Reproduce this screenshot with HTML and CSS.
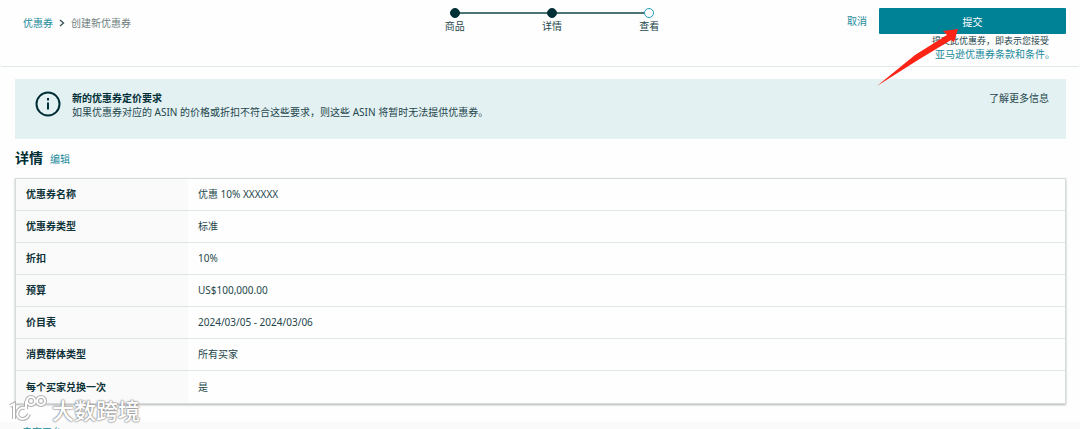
FILE: index.html
```html
<!DOCTYPE html>
<html lang="zh-CN">
<head>
    <meta charset="UTF-8">
    <meta name="viewport" content="width=device-width, initial-scale=1.0">
    <title>创建新优惠券</title>
    <link rel="stylesheet" href="styles.css">
</head>
<body>
    <header class="topbar">
        <nav class="breadcrumb">
            <a href="#">优惠券</a>
            <svg class="chevron" viewBox="0 0 6 8"><path d="M1 1l3.5 3L1 7"/></svg>
            <span>创建新优惠券</span>
        </nav>

        <ol class="steps">
            <li class="step done"><span class="dot"></span>商品</li>
            <li class="step done"><span class="dot"></span>详情</li>
            <li class="step current"><span class="dot"></span>查看</li>
        </ol>

        <div class="actions">
            <a class="cancel" href="#">取消</a>
            <div class="submit-box">
                <button class="submit" type="button">提交</button>
                <p class="terms">提交此优惠券，即表示您接受</p>
                <p class="terms-link"><a href="#">亚马逊优惠券条款和条件。</a></p>
                <svg class="arrow" viewBox="0 0 84 60"><path d="M2 58L40 27L72 7L68 3L83 1L79 14L76 12L43 32Z"/></svg>
            </div>
        </div>
    </header>

    <main>
        <section class="notice">
            <svg class="info" viewBox="0 0 26 26">
                <circle cx="13" cy="13" r="11.5"/>
                <path d="M13 11.5v7M13 7v2.4"/>
            </svg>
            <div class="notice-text">
                <h2>新的优惠券定价要求</h2>
                <p>如果优惠券对应的 ASIN 的价格或折扣不符合这些要求，则这些 ASIN 将暂时无法提供优惠券。</p>
            </div>
            <a class="more" href="#">了解更多信息</a>
        </section>

        <div class="heading">
            <h1>详情</h1>
            <a href="#">编辑</a>
        </div>

        <table class="details">
            <tr><th scope="row">优惠券名称</th><td>优惠 10% XXXXXX</td></tr>
            <tr><th scope="row">优惠券类型</th><td>标准</td></tr>
            <tr><th scope="row">折扣</th><td>10%</td></tr>
            <tr><th scope="row">预算</th><td>US$100,000.00</td></tr>
            <tr><th scope="row">价目表</th><td>2024/03/05 - 2024/03/06</td></tr>
            <tr><th scope="row">消费群体类型</th><td>所有买家</td></tr>
            <tr><th scope="row">每个买家兑换一次</th><td>是</td></tr>
        </table>
    </main>

    <footer class="footer">
        <a href="#">卖家平台</a>
    </footer>

    <div class="watermark">
        <svg viewBox="0 0 40 28">
            <g class="edge">
                <path d="M2 10l4-2v15M17 12c-8-2-11 10-3 11c4 0 6-2 7-5M18 13V5"/>
                <circle cx="23" cy="5" r="4"/><circle cx="33" cy="5" r="4"/>
            </g>
            <g class="fill">
                <path d="M2 10l4-2v15M17 12c-8-2-11 10-3 11c4 0 6-2 7-5M18 13V5"/>
                <circle cx="23" cy="5" r="4"/><circle cx="33" cy="5" r="4"/>
            </g>
        </svg>
        <span>大数跨境</span>
    </div>
</body>
</html>
```
FILE: styles.css
```css
* {
    margin: 0;
    padding: 0;
    box-sizing: border-box;
}

body {
    position: relative;
    height: 100vh;
    overflow: hidden;
    font-family: "Noto Sans", "Noto Sans CJK SC", sans-serif;
    font-size: 10px;
    line-height: 14px;
    color: #25474c;
    background-color: #fefefe;
}

a {
    color: #1b8a9b;
    text-decoration: none;
}

/* Header */
.topbar {
    display: grid;
    grid-template-columns: 51fr 292px 49fr;
    height: 67px;
    padding: 8px 14px 0 23px;
    border-bottom: 1px solid #e0e9ea;
    border-radius: 0 0 3px 3px;
}

.breadcrumb {
    display: flex;
    align-items: center;
    gap: 6px;
    height: 30px;
    color: #6f7f80;
}

.chevron {
    width: 6px;
    height: 8px;
    fill: none;
    stroke: #3c5558;
    stroke-width: 1.4;
}

/* Steps */
.steps {
    display: flex;
    list-style: none;
}

.step {
    position: relative;
    flex: 1;
    text-align: center;
}

.step + .step::before {
    content: "";
    position: absolute;
    top: 4px;
    right: 50%;
    width: 100%;
    height: 2px;
    background-color: #4d7377;
}

.dot {
    position: relative;
    z-index: 1;
    display: block;
    width: 10px;
    height: 10px;
    margin: 0 auto 1px;
    border: 1px solid #002f36;
    border-radius: 50%;
    background-color: #002f36;
}

.current .dot {
    border: 1px solid #1f9fb5;
    background-color: #fff;
}

/* Buttons */
.actions {
    display: flex;
    justify-content: flex-end;
    gap: 12px;
}

.cancel {
    padding-top: 6px;
}

.submit-box {
    position: relative;
    width: 187px;
}

.submit {
    display: block;
    width: 100%;
    height: 26px;
    padding-top: 2px;
    border: none;
    border-radius: 1px;
    background-color: #008296;
    color: #fff;
    font: inherit;
    cursor: pointer;
}

.terms {
    padding-right: 17px;
    font-size: 9px;
    text-align: right;
}

.terms-link {
    padding-right: 11px;
    line-height: 13px;
    text-align: right;
}

.arrow {
    position: absolute;
    top: 20px;
    left: -4px;
    width: 84px;
    height: 60px;
    fill: #fb2416;
}

/* Notice */
main {
    padding: 12px 14px 0 15px;
}

.notice {
    display: flex;
    height: 60px;
    padding: 12px 17px 0 20px;
    background-color: #e3f1f3;
}

.info {
    width: 26px;
    height: 26px;
    margin-right: 11px;
    fill: none;
    stroke: #002f36;
    stroke-width: 2;
}

.notice-text {
    flex: 1;
}

.notice h2 {
    font-size: 10px;
    line-height: 14px;
    color: #002f36;
}

.more {
    color: #25474c;
}

/* Details */
.heading {
    display: flex;
    align-items: baseline;
    gap: 7px;
    padding: 8px 0 10px;
}

.heading h1 {
    font-size: 14px;
    line-height: 21px;
    color: #002f36;
}

.details {
    width: 100%;
    border: 1px solid #d5dcdd;
    border-spacing: 0;
    box-shadow: 0 1px 2px rgba(0, 0, 0, 0.3);
}

.details th,
.details td {
    height: 32px;
    padding: 0 10px 1px;
    border-bottom: 1px solid #dfe6e7;
    text-align: left;
}

.details th {
    width: 172px;
    background-color: #fafafa;
    color: #0f3238;
}

.details tr:last-child th,
.details tr:last-child td {
    border-bottom: none;
}

/* Footer */
.footer {
    height: 24px;
    margin-top: 18px;
    padding: 3px 22px;
    background-color: #fafafa;
}

/* Watermark */
.watermark {
    position: absolute;
    left: 8px;
    bottom: 5px;
    display: flex;
    align-items: center;
    gap: 4px;
    font-size: 22px;
    font-weight: 500;
    line-height: 28px;
    color: #fff;
    text-shadow: 0 0 2px #888, 0 0 2px #888, 0 0 1px #aaa;
}

.watermark svg {
    width: 40px;
    height: 28px;
    overflow: visible;
    fill: none;
}

.edge {
    stroke: #b0b0b0;
    stroke-width: 4;
}

.fill {
    stroke: #fff;
    stroke-width: 2;
}
```
